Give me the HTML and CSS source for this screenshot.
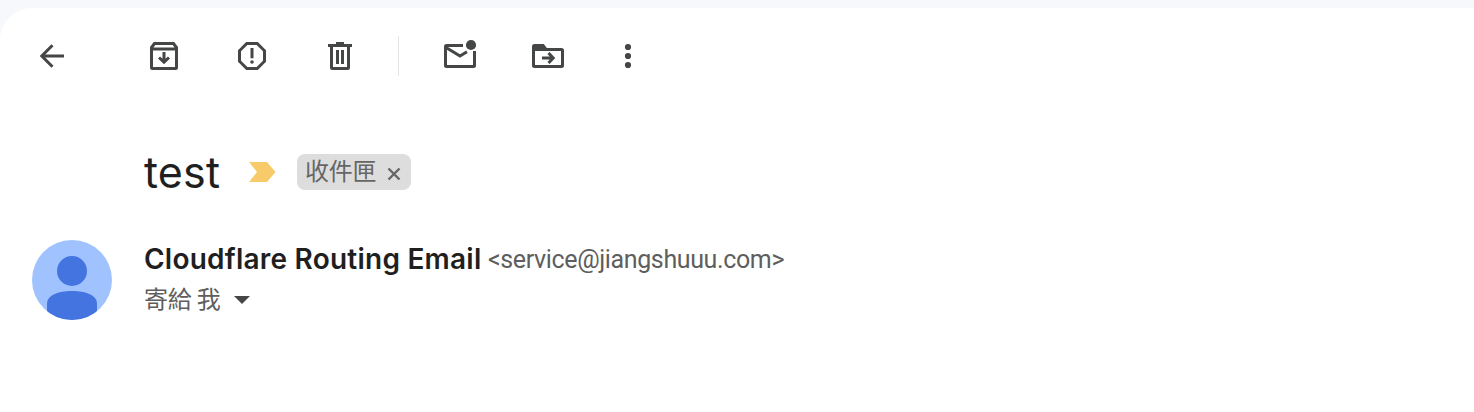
FILE: index.html
```
<!DOCTYPE html>
<html lang="zh-Hant">
<head>
<meta charset="utf-8">
<title>test</title>
<link rel="stylesheet" href="styles.css">
</head>
<body>
<main class="mail">
  <nav class="toolbar">
    <svg class="icon back" viewBox="-24 -24 48 48"><path class="line" d="M12 0H-9.5M.5-10.7L-10.2 0L.5 10.7"/></svg>
    <svg class="icon" viewBox="-24 -24 48 48"><path class="line" d="M-12.5-8.5L-9.5-12.5H9.5L12.5-8.5V11.5Q12.5 12.5 11.5 12.5H-11.5Q-12.5 12.5-12.5 11.5ZM-12.5-7H12.5M0-4V6M-5 1.5L0 6.2L5 1.5"/></svg>
    <svg class="icon" viewBox="-24 -24 48 48"><path class="line" d="M-5.2-12.5H5.2L12.5-5.2V5.2L5.2 12.5H-5.2L-12.5 5.2V-5.2ZM0-8V2.2"/><circle cx="0" cy="6" r="1.8"/></svg>
    <svg class="icon" viewBox="-24 -24 48 48"><path class="line" d="M-12-10.5H12M-8.5-10V11.5Q-8.5 12.5-7.5 12.5H7.5Q8.5 12.5 8.5 11.5V-10M-2.5-6V8M2.5-6V8"/><path d="M-4-14H4V-10H-4Z"/></svg>
    <span class="divider"></span>
    <svg class="icon" viewBox="-24 -24 48 48"><path class="line" d="M3-10.5H-13.5Q-14.5-10.5-14.5-9.5V9.5Q-14.5 10.5-13.5 10.5H13.5Q14.5 10.5 14.5 9.5V-5M-14-8.5L0 0L7-4.2"/><circle cx="11" cy="-11" r="5.1"/></svg>
    <svg class="icon" viewBox="-24 -24 48 48"><path class="line" d="M-14.5-9.5Q-14.5-10.5-13.5-10.5H-5L-2-6.5H13.5Q14.5-6.5 14.5-5.5V9.5Q14.5 10.5 13.5 10.5H-13.5Q-14.5 10.5-14.5 9.5ZM-6 2H4M.5-3L5.2 2L.5 7"/><path d="M-15-11H-4L-1-7V-5H-15Z"/></svg>
    <svg class="icon more" viewBox="-24 -24 48 48"><circle cy="-9" r="3.1"/><circle r="3.1"/><circle cy="9" r="3.1"/></svg>
  </nav>
  <header class="subject">
    <h1>test</h1>
    <svg class="important" viewBox="0 0 27 20"><path d="M0 0H18L26.5 10L18 20H0L8 10Z"/></svg>
    <span class="label"><span class="folder">收件匣</span><svg class="close" viewBox="0 0 14 14"><path d="M1.5 1.5L12.5 12.5M12.5 1.5L1.5 12.5"/></svg></span>
  </header>
  <section class="sender">
    <svg class="avatar" viewBox="0 0 80 80"><defs><clipPath id="disc"><circle cx="40" cy="40" r="40"/></clipPath></defs><g clip-path="url(#disc)"><path class="sky" d="M0 0H80V80H0Z"/><circle class="person" cx="40" cy="31" r="15"/><path class="person" d="M15 80V64C15 55 26 51 40 51S65 55 65 64V80Z"/></g></svg>
    <div class="details">
      <div class="from"><strong class="name">Cloudflare Routing Email</strong><span class="address">&lt;service@jiangshuuu.com&gt;</span></div>
      <div class="to"><span class="recipient">寄給 我</span><svg class="caret" viewBox="0 0 16 8"><path d="M0 0H16L8 8Z"/></svg></div>
    </div>
  </section>
</main>
</body>
</html>
```
FILE: styles.css
```
* { box-sizing: border-box; }
body { margin: 0; padding-top: 8px; background: #f6f8fc; font-family: Roboto, "Noto Sans CJK TC", sans-serif; }
.mail { height: 404px; background: #fff; border-radius: 32px 0 0 0; overflow: hidden; }
.toolbar { display: flex; align-items: center; gap: 40px; height: 96px; padding-left: 28px; }
.icon { width: 48px; height: 48px; flex: none; fill: #444746; }
.back { margin-right: 24px; }
.more { margin-left: -8px; }
.line { fill: none; stroke: #444746; stroke-width: 3; }
.divider { width: 1px; height: 40px; margin: 0 -3px 0 -6px; background: #e4e5e6; }
.subject { display: flex; align-items: center; height: 56px; margin-top: 40px; padding-left: 144px; }
h1 { width: 105px; margin: 0; color: #1f1f1f; font: 400 43px/56px Inter, sans-serif; letter-spacing: 0.2px; }
.important { width: 27px; height: 20px; fill: #f7cb69; }
.label { display: flex; align-items: center; width: 114px; height: 36px; margin-left: 21px; padding-left: 8px; border-radius: 8px; background: #ddd; color: #666; font-family: "Noto Sans CJK TC", sans-serif; font-size: 24px; line-height: 32px; white-space: nowrap; }
.folder { width: 72px; padding-bottom: 4px; letter-spacing: -0.3px; }
.close { width: 14px; height: 14px; margin: 3px 0 0 10px; fill: none; stroke: #666; stroke-width: 2.4; }
.sender { display: flex; gap: 32px; margin-top: 32px; padding: 8px 0 0 32px; }
.avatar { width: 80px; height: 80px; flex: none; }
.sky { fill: #a0c2ff; }
.person { fill: #4374e0; }
.details { white-space: nowrap; }
.from { display: flex; height: 40px; }
.name { width: 344px; color: #1f1f1f; font: 600 28px/39px Inter, sans-serif; letter-spacing: 0.23px; }
.address { color: #5e5e5e; font-size: 25px; line-height: 40px; letter-spacing: -0.37px; }
.to { display: flex; align-items: center; height: 40px; color: #5e5e5e; font-family: "Noto Sans CJK TC", sans-serif; font-size: 24px; line-height: 36px; }
.recipient { width: 78px; padding-bottom: 4px; letter-spacing: -0.2px; }
.caret { width: 16px; height: 8px; margin-left: 12px; fill: #444746; }
```
